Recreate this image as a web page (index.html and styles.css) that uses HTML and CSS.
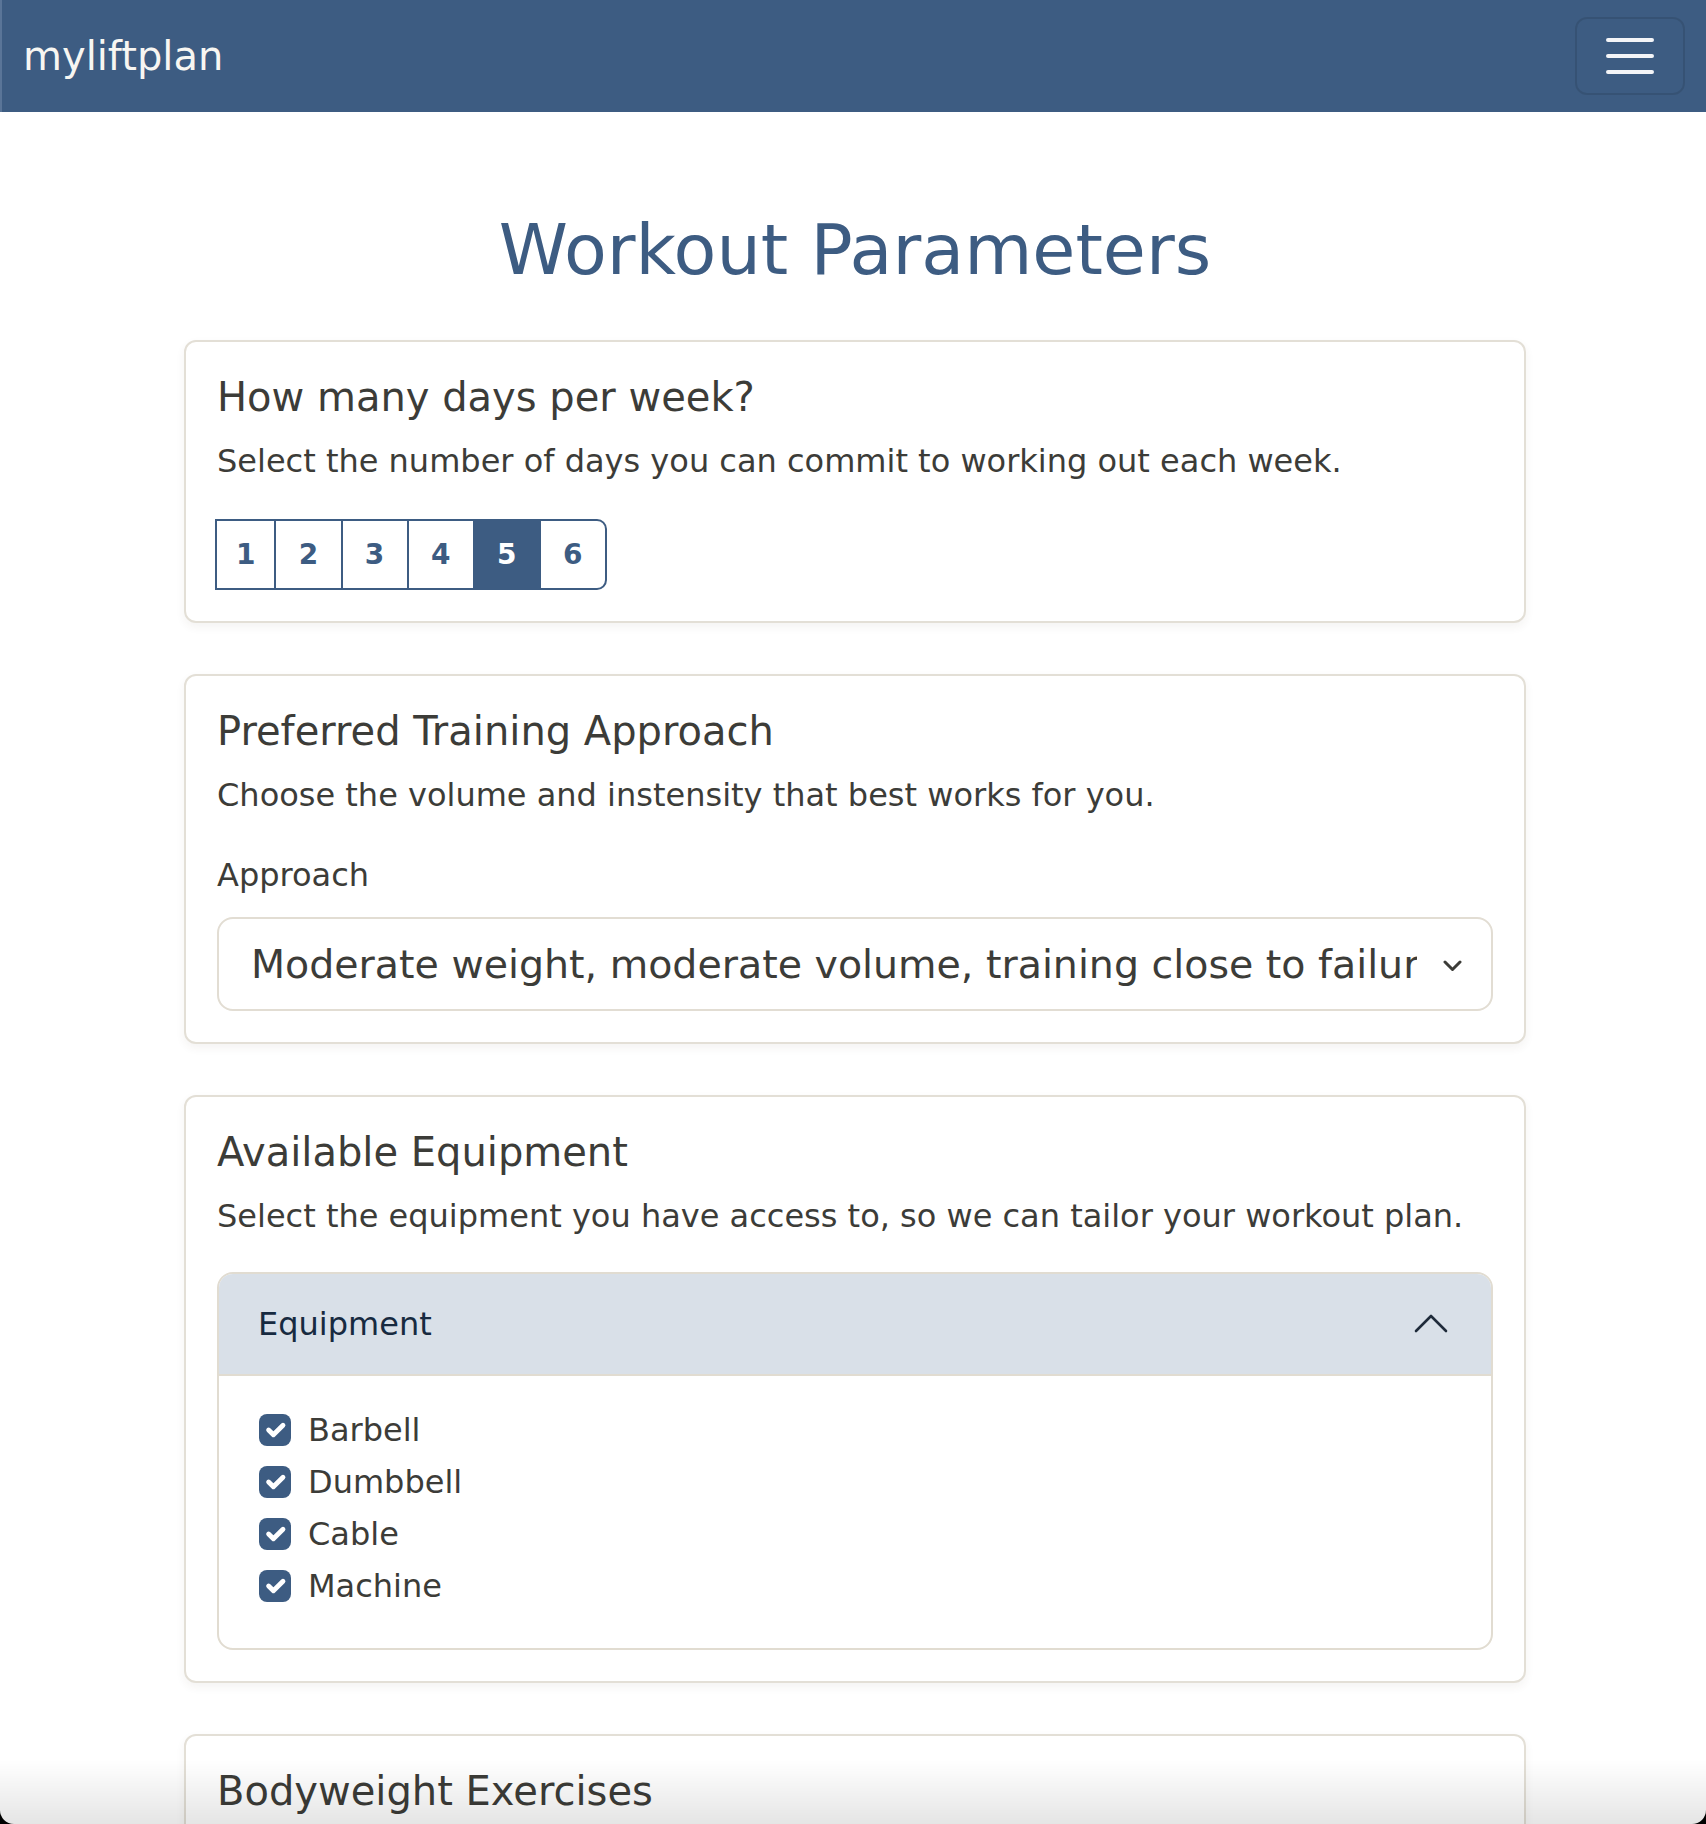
FILE: index.html
```html
<!DOCTYPE html>
<html lang="en">
<head>
<meta charset="utf-8">
<title>myliftplan - Workout Parameters</title>
<link rel="stylesheet" href="styles.css">
</head>
<body>
<nav class="navbar">
  <a class="brand" href="#">myliftplan</a>
  <button class="toggler" type="button" aria-label="Toggle navigation">
    <svg width="48" height="36" viewBox="0 0 48 36"><path d="M2 2H46M2 18H46M2 34H46" stroke="#f4f5f8" stroke-width="4" stroke-linecap="round"/></svg>
  </button>
</nav>

<main class="container">
  <h1 class="title">Workout Parameters</h1>

  <div class="cards">
    <section class="card">
      <h5 class="card-title">How many days per week?</h5>
      <p class="card-text">Select the number of days you can commit to working out each week.</p>
      <div class="btn-group">
        <span class="btn">1</span>
        <span class="btn">2</span>
        <span class="btn">3</span>
        <span class="btn">4</span>
        <span class="btn active">5</span>
        <span class="btn last">6</span>
      </div>
    </section>

    <section class="card">
      <h5 class="card-title">Preferred Training Approach</h5>
      <p class="card-text">Choose the volume and instensity that best works for you.</p>
      <label class="form-label">Approach</label>
      <div class="select">
        <span class="select-text">Moderate weight, moderate volume, training close to failure</span>
        <svg class="select-chev" width="19" height="12" viewBox="0 0 19 12"><path d="M2 2L9.5 9.5L17 2" fill="none" stroke="#3c3c38" stroke-width="3" stroke-linecap="round" stroke-linejoin="round"/></svg>
      </div>
    </section>

    <section class="card">
      <h5 class="card-title">Available Equipment</h5>
      <p class="card-text">Select the equipment you have access to, so we can tailor your workout plan.</p>
      <div class="accordion">
        <div class="acc-header">
          <span>Equipment</span>
          <svg width="34" height="19" viewBox="0 0 34 19"><path d="M2 17L17 2L32 17" fill="none" stroke="#1f2b3a" stroke-width="2.6" stroke-linecap="round" stroke-linejoin="round"/></svg>
        </div>
        <div class="acc-body">
          <div class="form-check"><span class="check"><svg width="32" height="32" viewBox="0 0 20 20"><path d="M6 10l3 3 6-6" fill="none" stroke="#fff" stroke-width="3" stroke-linecap="round" stroke-linejoin="round"/></svg></span><span class="check-label">Barbell</span></div>
          <div class="form-check"><span class="check"><svg width="32" height="32" viewBox="0 0 20 20"><path d="M6 10l3 3 6-6" fill="none" stroke="#fff" stroke-width="3" stroke-linecap="round" stroke-linejoin="round"/></svg></span><span class="check-label">Dumbbell</span></div>
          <div class="form-check"><span class="check"><svg width="32" height="32" viewBox="0 0 20 20"><path d="M6 10l3 3 6-6" fill="none" stroke="#fff" stroke-width="3" stroke-linecap="round" stroke-linejoin="round"/></svg></span><span class="check-label">Cable</span></div>
          <div class="form-check"><span class="check"><svg width="32" height="32" viewBox="0 0 20 20"><path d="M6 10l3 3 6-6" fill="none" stroke="#fff" stroke-width="3" stroke-linecap="round" stroke-linejoin="round"/></svg></span><span class="check-label">Machine</span></div>
        </div>
      </div>
    </section>

    <section class="card">
      <h5 class="card-title">Bodyweight Exercises</h5>
    </section>
  </div>
</main>

<div class="window-edge" aria-hidden="true"></div>
</body>
</html>
```
FILE: styles.css
```css
* { box-sizing: border-box; }

html, body {
  margin: 0;
  padding: 0;
  background: #ffffff;
}

body {
  font-family: "DejaVu Sans", "Noto Sans", sans-serif;
  font-size: 32px;
  line-height: 48px;
  color: #3c3c38;
}

/* Navbar */
.navbar {
  height: 112px;
  background: #3d5c82;
  border-left: 2px solid #5a7598;
  display: flex;
  align-items: center;
  justify-content: space-between;
  padding: 0 21px 0 21px;
}

.brand {
  color: #f7f6f2;
  font-size: 40px;
  line-height: 48px;
  text-decoration: none;
  margin-top: 0;
}

.toggler {
  width: 110px;
  height: 78px;
  border: 2px solid rgba(0, 0, 0, 0.1);
  border-radius: 12px;
  background: transparent;
  display: flex;
  align-items: center;
  justify-content: center;
  padding: 0;
  margin-top: -1px;
}

/* Main */
.container {
  width: 1342px;
  margin: 0 0 0 calc(50% - 669px);
  padding-top: 96px;
}

.title {
  margin: 0 0 48px;
  text-align: center;
  font-size: 70px;
  line-height: 84px;
  font-weight: 400;
  color: #3d5c82;
}

.cards {
  display: flex;
  flex-direction: column;
  gap: 51px;
}

.card {
  border: 2px solid #e3dfd6;
  border-radius: 12px;
  padding: 31px;
  background: #fff;
  box-shadow: 0 4px 10px rgba(60, 50, 30, 0.06);
}

.card-title {
  margin: 0 0 16px;
  font-size: 40px;
  line-height: 48px;
  font-weight: 400;
  color: #3c3c38;
}

.card-text {
  margin: 0 0 32px;
}

/* Day buttons */
.btn-group {
  display: inline-flex;
  margin-left: -2px;
  margin-top: 2px;
}

.btn {
  display: block;
  border: 2px solid #3d5c82;
  margin-left: -2px;
  padding: 12.5px 22.3px;
  font-size: 28px;
  line-height: 42px;
  font-weight: 700;
  color: #3d5c82;
  background: #fff;
}

.btn:first-child {
  margin-left: 0;
  padding-left: 19px;
  padding-right: 19px;
}

.btn.active {
  background: #3d5c82;
  color: #fff;
}

.btn.last {
  border-radius: 0 10px 10px 0;
}

/* Select */
.form-label {
  display: block;
  margin-bottom: 18px;
}

.select {
  display: flex;
  align-items: center;
  height: 94px;
  border: 2px solid #e2ddd3;
  border-radius: 16px;
  padding: 0 29px 0 32px;
  font-size: 39.5px;
  line-height: 60px;
  color: #3c3c38;
}

.select-text {
  flex: 1;
  min-width: 0;
  overflow: hidden;
  white-space: nowrap;
  text-overflow: clip;
  margin-right: 26px;
}

.select-chev {
  flex: none;
  margin-top: 4px;
}

/* Accordion */
.accordion {
  border: 2px solid #e1dcd1;
  border-radius: 16px;
  overflow: hidden;
}

.acc-header {
  display: flex;
  align-items: center;
  justify-content: space-between;
  height: 102px;
  padding: 0 43px 0 39px;
  background: #d9e0e8;
  border-bottom: 2px solid #e1dcd1;
  color: #172a40;
}

.acc-header svg {
  margin-top: -2px;
}

.acc-body {
  padding: 30px 40px 34px;
}

.form-check {
  display: flex;
  align-items: center;
  gap: 17px;
  height: 48px;
  margin-bottom: 4px;
}

.check {
  width: 32px;
  height: 32px;
  border-radius: 8px;
  background: #3d5c82;
  display: flex;
  flex: none;
}

.check-label {
  color: #3c3c38;
}

/* Window edge (screenshot frame) */
.window-edge {
  position: fixed;
  inset: 0;
  pointer-events: none;
  border-radius: 0 0 14px 14px;
  box-shadow: 0 0 0 40px #000;
  background: linear-gradient(to bottom, rgba(0, 0, 0, 0) calc(100% - 64px), rgba(0, 0, 0, 0.1) 100%);
}
```
